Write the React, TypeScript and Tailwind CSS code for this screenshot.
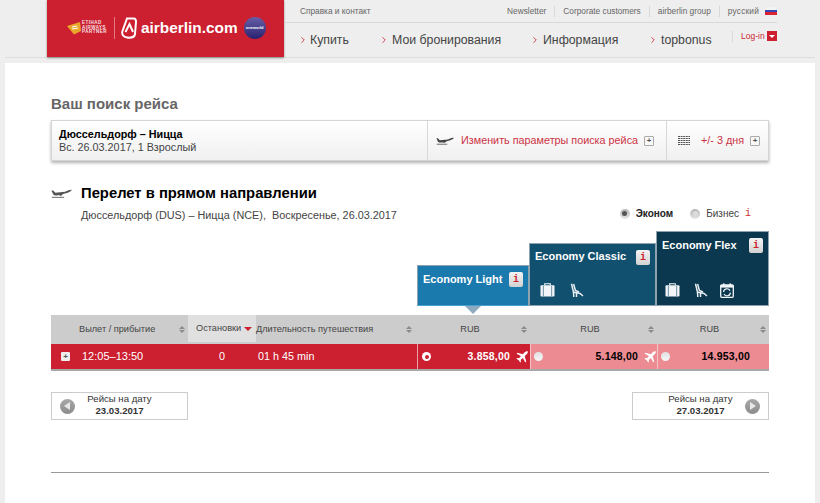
import { ChevronRight } from "lucide-react";

const font = "font-['Liberation_Sans',Arial,sans-serif]";

const PlaneSide = ({ className }: { className?: string }) => (
	<svg viewBox="0 0 24 12" className={className} fill="currentColor" aria-hidden="true">
		<path d="M0.5 3 L2.5 3 L5 5.6 L16 4.6 C19 2.8 22 2 23.6 2.2 C24 3.2 21 5 17 6.4 L8.5 8.6 C6 9 3.5 8.6 2.6 7.6 Z" />
		<path d="M9 6 L14 6.4 L12 9 L10 9 Z" />
		<rect x="1" y="10.4" width="14" height="1" />
	</svg>
);

const PlaneTop = ({ className }: { className?: string }) => (
	<svg viewBox="0 0 16 16" className={className} fill="currentColor" aria-hidden="true">
		<path d="M15.6 0.4 C14.6 -0.2 12.8 0.6 11.6 1.8 L9 4.4 L2 2.4 L0.8 3.6 L6.6 6.8 L4 9.8 L1.6 9.4 L0.6 10.4 L3.6 12.4 L5.6 15.4 L6.6 14.4 L6.2 12 L9.2 9.4 L12.4 15.2 L13.6 14 L11.6 7 L14.2 4.4 C15.4 3.2 16.2 1.4 15.6 0.4 Z" />
	</svg>
);

const Bag = () => (
	<svg viewBox="0 0 16 15" className="w-[15px] h-[14px]" aria-hidden="true">
		<rect x="0.5" y="2.5" width="15" height="12" rx="1" fill="#f3f6f8" />
		<path d="M5 2.5 V0.8 H11 V2.5" fill="none" stroke="#f3f6f8" strokeWidth="1.2" />
		<rect x="3" y="3" width="1.2" height="11" fill="#7d9aad" />
		<rect x="11.8" y="3" width="1.2" height="11" fill="#7d9aad" />
	</svg>
);

const Seat = () => (
	<svg viewBox="0 0 14 15" className="w-[14px] h-[15px]" fill="none" stroke="#e8eef2" strokeWidth="1.5" aria-hidden="true">
		<path d="M1.5 0.8 L3.5 9 L10 10.5 L13 13" />
		<path d="M3.6 1 L5.4 7.4 L9 9" />
		<path d="M3.5 9 L3.8 14 M6.5 10 L6.5 14" />
	</svg>
);

const Rebook = () => (
	<svg viewBox="0 0 14 15" className="w-[14px] h-[15px]" aria-hidden="true">
		<rect x="0.7" y="2" width="12.6" height="12.3" rx="1" fill="none" stroke="#f3f6f8" strokeWidth="1.3" />
		<rect x="0.7" y="2" width="12.6" height="2.6" fill="#f3f6f8" />
		<rect x="3" y="0.4" width="1.6" height="3" fill="#f3f6f8" />
		<rect x="9.4" y="0.4" width="1.6" height="3" fill="#f3f6f8" />
		<path d="M3.6 9 A3.4 3.4 0 0 1 10 7.6 M10.4 9.6 A3.4 3.4 0 0 1 4 11" fill="none" stroke="#f3f6f8" strokeWidth="1.2" />
	</svg>
);

const Sort = ({ red }: { red?: boolean }) =>
	red ? (
		<span className="w-0 h-0 border-x-[4px] border-x-transparent border-t-[4px] border-t-[#cc1f30]" />
	) : (
		<span className="flex flex-col gap-px">
			<span className="w-0 h-0 border-x-[3px] border-x-transparent border-b-[3px] border-b-[#8a8a8a]" />
			<span className="w-0 h-0 border-x-[3px] border-x-transparent border-t-[3px] border-t-[#8a8a8a]" />
		</span>
	);

const PlusBox = () => (
	<span className="w-[10px] h-[10px] border border-[#aaa] rounded-[1px] bg-[#f8f8f8] flex items-center justify-center text-[8px] leading-none text-[#555] font-bold">
		+
	</span>
);

const InfoBtn = () => (
	<span className="w-[14px] h-[15px] rounded-[2px] bg-gradient-to-b from-[#f4f4f4] to-[#d2d2d2] flex items-center justify-center text-[10px] font-bold text-[#cc1f30] font-['Liberation_Mono',monospace]">
		i
	</span>
);

const Radio = ({ selected }: { selected?: boolean }) => (
	<span
		className={`w-[9px] h-[9px] rounded-full flex items-center justify-center shrink-0 ${
			selected ? "bg-white" : "bg-gradient-to-b from-[#e2e2e2] to-[#f7f7f7]"
		}`}
	>
		{selected && <span className="w-[4px] h-[4px] rounded-full bg-[#cc1f30]" />}
	</span>
);

const ClassRadio = ({ selected }: { selected?: boolean }) => (
	<span className="w-[10px] h-[10px] rounded-full bg-gradient-to-b from-[#b4b4b4] to-[#e6e6e6] flex items-center justify-center shrink-0">
		<span className={`w-[5px] h-[5px] rounded-full ${selected ? "bg-[#555]" : "bg-[#dcdcdc]"}`} />
	</span>
);

const Arrow = ({ right }: { right?: boolean }) => (
	<span className="w-[15px] h-[15px] rounded-full bg-gradient-to-b from-[#a8a8a8] to-[#8c8c8c] flex items-center justify-center shrink-0">
		<span
			className={`w-0 h-0 border-y-[4px] border-y-transparent ${
				right ? "border-l-[6px] border-l-[#e8e8e8] ml-px" : "border-r-[6px] border-r-[#e8e8e8] -ml-px"
			}`}
		/>
	</span>
);

const DayButton = ({ date, right }: { date: string; right?: boolean }) => (
	<div className="w-[137px] h-[28px] border border-[#ccc] bg-white flex items-center px-[8px]">
		{!right && <Arrow />}
		<div className={`flex-1 text-center text-[9.6px] leading-[12px] text-[#333] pb-[3px] ${right ? "-mr-[15px]" : "-ml-[15px]"}`}>
			<div>Рейсы на дату</div>
			<div className="font-bold">{date}</div>
		</div>
		{right && <Arrow right />}
	</div>
);

const navItems = [
	{ label: "Купить", width: "w-[81px]" },
	{ label: "Мои бронирования", width: "w-[151px]" },
	{ label: "Информация", width: "w-[118px]" },
	{ label: "topbonus", width: "w-[83px]" },
];

const App = () => {
	return (
		<div className={`${font} w-[820px] h-[503px] overflow-hidden bg-[#eeeeee] text-[#333]`}>
			<header className="h-[58px] border-b border-[#dcdcdc] mx-[5px] pl-[42px] flex">
				<div className="w-[237px] h-[57px] bg-[#cc1f30] shadow-[0_1px_2px_rgba(0,0,0,0.4)] flex items-center pl-[20px] pb-[1px] text-white shrink-0">
					<svg viewBox="0 0 14 14" className="w-[14px] h-[14px]" aria-hidden="true">
						<path d="M0 5 L13 1 L14 10 L7 13.5 Z" fill="#e9a72b" />
						<path d="M5 6 L10 5 M5 8 L11 7" stroke="#fff" strokeWidth="1" />
					</svg>
					<span className="w-[26px] ml-[1px] text-[4.5px] leading-[4.5px] font-bold text-[#f6e3e5] tracking-[0.5px] whitespace-nowrap">
						<span className="block">ETIHAD</span>
						<span className="block">AIRWAYS</span>
						<span className="block">PARTNER</span>
					</span>
					<span className="w-px h-[22px] bg-[#e27a84] ml-[6px] mr-[6px]" />
					<svg viewBox="0 0 16 22" className="w-[16px] h-[22px] mr-[4px]" fill="none" stroke="#fff" strokeWidth="2" aria-hidden="true">
						<path d="M6 1.5 H13 C15 1.5 15 3 15 5 L14 17 C13.6 20 10 21 6 20.5 C2 20 0.5 17 1.5 14 Z" />
						<path d="M4.5 15 L8.5 7 L12 15" />
					</svg>
					<span className="text-[15.4px] font-bold leading-none">airberlin.com</span>
					<span className="ml-[6px] w-[22px] h-[22px] rounded-full bg-gradient-to-b from-[#6a5fa8] to-[#2a2170] flex items-center justify-center text-[4px] font-bold text-white">
						oneworld
					</span>
				</div>
				<div className="w-[493px] shrink-0">
					<div className="h-[23px] border-b border-[#d8d8d8] flex items-center justify-between pl-[16px] text-[8.3px] text-[#666]">
						<span>Справка и контакт</span>
						<div className="flex items-center">
							<span className="pr-[8px] border-r border-[#d8d8d8] leading-[11px]">Newsletter</span>
							<span className="px-[8px] border-r border-[#d8d8d8] leading-[11px]">Corporate customers</span>
							<span className="px-[8px] border-r border-[#d8d8d8] leading-[11px]">airberlin group</span>
							<span className="pl-[8px] tracking-[0.2px]">русский</span>
							<span className="ml-[6px] w-[12px] h-[8px] flex flex-col">
								<span className="h-[3px] bg-[#f2f2f2]" />
								<span className="h-[2px] bg-[#3447b5]" />
								<span className="h-[3px] bg-[#d92332]" />
							</span>
						</div>
					</div>
					<div className="flex h-[34px] pl-[15px]">
						{navItems.map((item) => (
							<div key={item.label} className={`${item.width} flex items-center text-[12.3px] text-[#444] whitespace-nowrap`}>
								<ChevronRight size={10} strokeWidth={2} className="text-[#cc1f30] -ml-[1px] shrink-0" />
								<span className={item.label === "Купить" ? "ml-[2px]" : "ml-[3px]"}>{item.label}</span>
							</div>
						))}
						<div className="flex items-start pt-[8px]">
							<span className="border-l border-[#d8d8d8] h-[11px] mr-[8px]" />
							<span className="text-[8.5px] text-[#cc1f30] leading-[10px] whitespace-nowrap">Log-in</span>
							<span className="ml-[2px] w-[10px] h-[10px] bg-[#cc1f30] flex items-center justify-center">
								<span className="w-0 h-0 border-x-[3px] border-x-transparent border-t-[3px] border-t-white" />
							</span>
						</div>
					</div>
				</div>
			</header>

			<main className="mt-[5px] mx-[5px] h-[440px] bg-white px-[46px] pt-[32px]">
				<h2 className="text-[15px] font-bold text-[#666] leading-[17px]">Ваш поиск рейса</h2>

				<section className="mt-[8px] h-[41px] border border-[#d4d4d4] shadow-[0_2px_3px_rgba(0,0,0,0.3)] bg-gradient-to-b from-white to-[#f0f0f0] flex text-[10.8px]">
					<div className="w-[375px] pl-[7px] pt-[7px] leading-[12.5px]">
						<div className="font-bold text-black">Дюссельдорф – Ницца</div>
						<div className="text-[#444]">Вс. 26.03.2017, 1 Взрослый</div>
					</div>
					<div className="w-[239px] border-l border-[#d8d8d8] flex items-center pl-[8px] text-[#cc3344]">
						<PlaneSide className="w-[18px] h-[9px] text-[#444] mr-[7px]" />
						<span className="whitespace-nowrap">Изменить параметры поиска рейса</span>
						<span className="ml-[6px]">
							<PlusBox />
						</span>
					</div>
					<div className="flex-1 border-l border-[#d8d8d8] flex items-center pl-[11px] text-[#cc3344]">
						<svg viewBox="0 0 12 9" className="w-[12px] h-[9px] mr-[11px]" aria-hidden="true">
							<path d="M0 0.5 H12 M0 2.5 H12 M0 4.5 H12 M0 6.5 H12 M0 8.5 H12" stroke="#555" strokeWidth="1" strokeDasharray="2 0.6" />
						</svg>
						<span className="whitespace-nowrap">+/- 3 дня</span>
						<span className="ml-[6px]">
							<PlusBox />
						</span>
					</div>
				</section>

				<section className="mt-[23px] flex items-start justify-between">
					<div className="flex">
						<PlaneSide className="w-[21px] h-[12px] mt-[3px] text-[#555]" />
						<div className="ml-[9px]">
							<div className="text-[14.8px] font-bold text-black leading-[18px]">Перелет в прямом направлении</div>
							<div className="mt-[7px] text-[10.85px] text-[#444] leading-[13px] whitespace-pre">
								Дюссельдорф (DUS) – Ницца (NCE),  Воскресенье, 26.03.2017
							</div>
						</div>
					</div>
					<div className="flex items-center mt-[22px] mr-[18px] text-[10px] text-[#444]">
						<ClassRadio selected />
						<span className="ml-[6px] font-bold text-[#222]">Эконом</span>
						<span className="ml-[17px]">
							<ClassRadio />
						</span>
						<span className="ml-[6px]">Бизнес</span>
						<span className="ml-[6px] text-[#cc1f30] font-['Liberation_Mono',monospace]">i</span>
					</div>
				</section>

				<section className="mt-[9px] flex justify-end items-end">
					<div className="relative w-[112px] h-[41px] bg-[#1a7aae] border border-[#8fa3af] border-b-[#4aa0cc] px-[5px] pt-[6px] text-white">
						<div className="flex justify-between items-start text-[11px] font-bold">
							<span className="leading-[14px]">Economy Light</span>
							<InfoBtn />
						</div>
						<span className="absolute left-[47px] top-[40px] w-0 h-0 border-x-[8px] border-x-transparent border-t-[8px] border-t-[#8fa9bf]" />
					</div>
					<div className="w-[127px] h-[63px] bg-[#12506f] border border-[#8fa3af] px-[5px] pt-[6px] text-white flex flex-col justify-between pb-[7px]">
						<div className="flex justify-between items-start text-[11px] font-bold">
							<span className="leading-[12px]">Economy Classic</span>
							<InfoBtn />
						</div>
						<div className="flex gap-[15px] pl-[5px]">
							<Bag />
							<Seat />
						</div>
					</div>
					<div className="w-[113px] h-[75px] bg-[#0b384f] border border-[#8fa3af] px-[5px] pt-[6px] text-white flex flex-col justify-between pb-[7px]">
						<div className="flex justify-between items-start text-[11px] font-bold">
							<span className="leading-[14px]">Economy Flex</span>
							<InfoBtn />
						</div>
						<div className="flex gap-[14px] pl-[3px]">
							<Bag />
							<Seat />
							<span className="-ml-[2px]">
								<Rebook />
							</span>
						</div>
					</div>
				</section>

				<section className="mt-[9px]">
					<div className="h-[29px] bg-[#cccccc] grid grid-cols-[137px_68px_161px_113px_127px_112px] text-[9.2px] text-[#444]">
						<div className="flex items-center justify-between pl-[28px] pr-[3px]">
							Вылет / прибытие
							<Sort />
						</div>
						<div className="h-[27px] bg-[#e0e0e0] flex items-center justify-between pl-[8px] pr-[4px]">
							Остановки
							<Sort red />
						</div>
						<div className="flex items-center justify-between pr-[5px]">
							Длительность путешествия
							<Sort />
						</div>
						{["light", "classic", "flex"].map((fare) => (
							<div key={fare} className="flex items-center pr-[3px]">
								<span className="flex-1 text-center pl-[2px]">RUB</span>
								<Sort />
							</div>
						))}
					</div>
					<div className="h-[27px] border-b-2 border-[#a8a8a8] grid grid-cols-[137px_68px_161px_113px_127px_112px] text-[10.8px]">
						<div className="bg-[#cc1f30] text-white flex items-center pl-[10px]">
							<span className="w-[9px] h-[9px] rounded-[1px] bg-[#eee] text-[#555] text-[8px] font-bold flex items-center justify-center">+</span>
							<span className="ml-[12px] text-[11px]">12:05–13:50</span>
						</div>
						<div className="bg-[#cc1f30] text-white flex items-center justify-center">0</div>
						<div className="bg-[#cc1f30] text-white flex items-center pl-[2px]">01 h 45 min</div>
						<div className="bg-[#cc1f30] border-l border-[#e9a0a6] text-white flex items-center pl-[4px] pr-[2px] font-bold text-[10.5px]">
							<Radio selected />
							<span className="flex-1 text-right tracking-[0.2px]">3.858,00</span>
							<PlaneTop className="w-[12px] h-[12px] ml-[6px]" />
						</div>
						<div className="bg-[#ec8b92] border-l border-[#f3c3c7] text-black flex items-center pl-[3px] pr-[1px] font-bold text-[10.5px]">
							<Radio />
							<span className="flex-1 text-right tracking-[0.2px]">5.148,00</span>
							<PlaneTop className="w-[12px] h-[12px] ml-[6px] text-white" />
						</div>
						<div className="bg-[#ec8b92] border-l border-[#f3c3c7] text-black flex items-center pl-[3px] pr-[19px] font-bold text-[10.5px]">
							<Radio />
							<span className="flex-1 text-right tracking-[0.2px]">14.953,00</span>
						</div>
					</div>
				</section>

				<section className="mt-[21px] flex justify-between">
					<DayButton date="23.03.2017" />
					<DayButton date="27.03.2017" right />
				</section>

				<div className="mt-[52px] h-px bg-[#999]" />
			</main>
		</div>
	);
};

export default App;
